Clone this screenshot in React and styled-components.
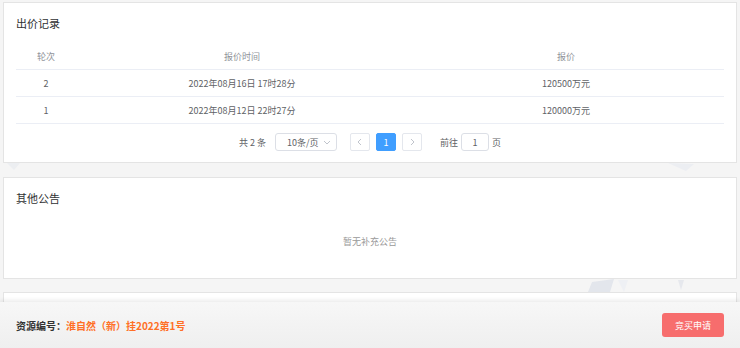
import React from 'react';
import styled, { createGlobalStyle } from 'styled-components';

const GlobalStyle = createGlobalStyle`
    html, body {
        margin: 0;
        padding: 0;
        background: #f5f5f5;
        font-family: "Microsoft YaHei", "Noto Sans CJK SC", "Liberation Sans", sans-serif;
        color: #606266;
    }
`;

const Page = styled.div`
    position: relative;
    height: 348px;
    overflow: hidden;
    padding: 2px 3px 0;
    box-sizing: border-box;
`;

const Decor = styled.svg`
    position: absolute;
    left: 0;
    top: 0;
    z-index: 0;
`;

const Card = styled.div`
    position: relative;
    z-index: 1;
    background: #fff;
    border: 1px solid #e4e4e4;
    padding: 0 12px;
    margin-bottom: ${p => p.gap || 0}px;
    height: ${p => p.h}px;
    box-sizing: border-box;
`;

const CardTitle = styled.div`
    height: 40px;
    line-height: 40px;
    font-size: 11px;
    color: #303133;
`;

const Table = styled.table`
    width: 100%;
    border-collapse: collapse;
    font-size: 9px;
    table-layout: fixed;
`;

const Th = styled.th`
    font-weight: normal;
    color: #909399;
    height: 26px;
    padding: 0;
    text-align: center;
    border-bottom: 1px solid #ebeef5;
    width: ${p => p.w || 'auto'};
`;

const Td = styled.td`
    color: #606266;
    height: 26px;
    padding: 0;
    text-align: center;
    border-bottom: 1px solid #ebeef5;
`;

const Pager = styled.div`
    display: flex;
    justify-content: center;
    align-items: center;
    padding-top: 9px;
    font-size: 9px;
    color: #606266;
    white-space: nowrap;
`;

const Total = styled.span`
    margin-right: 9px;
`;

const Select = styled.div`
    width: 62px;
    height: 18px;
    border: 1px solid #dcdfe6;
    border-radius: 3px;
    box-sizing: border-box;
    display: flex;
    align-items: center;
    justify-content: space-between;
    padding: 0 4px 0 11px;
    margin-right: 13px;
    color: #606266;
`;

const PageBtn = styled.div`
    width: 20px;
    height: 18px;
    box-sizing: border-box;
    border: 1px solid ${p => (p.active ? '#409eff' : '#e4e7ed')};
    background: ${p => (p.active ? '#409eff' : '#fff')};
    color: ${p => (p.active ? '#fff' : '#c0c4cc')};
    border-radius: 2px;
    display: flex;
    align-items: center;
    justify-content: center;
    margin-right: 6px;
`;

const Jump = styled.div`
    display: flex;
    align-items: center;
    margin-left: 12px;
    gap: 3px;
`;

const JumpInput = styled.div`
    width: 28px;
    height: 18px;
    box-sizing: border-box;
    border: 1px solid #dcdfe6;
    border-radius: 3px;
    display: flex;
    align-items: center;
    justify-content: center;
`;

const Empty = styled.div`
    text-align: center;
    line-height: 48px;
    font-size: 9px;
    color: #999;
`;

const Footer = styled.div`
    position: absolute;
    left: 0;
    right: 0;
    bottom: 0;
    height: 46px;
    z-index: 2;
    background: linear-gradient(#f7f7f7, #efefef);
    box-shadow: 0 -2px 4px rgba(0, 0, 0, 0.08);
    display: flex;
    align-items: center;
    justify-content: space-between;
    padding: 0 16px;
    box-sizing: border-box;
`;

const Code = styled.div`
    font-size: 10px;
    font-weight: bold;
    color: #333;
    span {
        color: #ff7026;
    }
`;

const Apply = styled.button`
    width: 62px;
    height: 24px;
    border: none;
    border-radius: 3px;
    background: #f76d6d;
    color: #fff;
    font-size: 9px;
    font-family: inherit;
    padding: 0;
`;

const Chevron = ({ dir }) => {
    const d = { down: 'M2 4l3 3 3-3', left: 'M6 2L3 5l3 3', right: 'M4 2l3 3-3 3' }[dir];
    return (
        <svg width="10" height="10" viewBox="0 0 10 10">
            <path d={d} fill="none" stroke="#c0c4cc" strokeWidth="1" />
        </svg>
    );
};

const records = [
    { round: 2, time: '2022年08月16日 17时28分', price: '120500万元' },
    { round: 1, time: '2022年08月12日 22时27分', price: '120000万元' },
];

const App = () => {
    return (
        <>
            <GlobalStyle />
            <Page>
                <Decor width="740" height="348">
                    <polygon points="6,162 20,163 14,170" fill="#eceef1" />
                    <polygon points="668,163 694,164 686,171" fill="#eceef2" />
                    <polygon points="592,282 614,279 610,292 588,292" fill="#e3e6ec" />
                    <polygon points="618,280 628,280 624,292" fill="#eef0f4" />
                    <polygon points="678,280 684,280 681,290" fill="#e6e8ed" />
                </Decor>
                <Card h={161} gap={14}>
                    <CardTitle>出价记录</CardTitle>
                    <Table>
                        <thead>
                            <tr>
                                <Th w="60px">轮次</Th>
                                <Th w="332px">报价时间</Th>
                                <Th>报价</Th>
                            </tr>
                        </thead>
                        <tbody>
                            {records.map(r => (
                                <tr key={r.round}>
                                    <Td>{r.round}</Td>
                                    <Td>{r.time}</Td>
                                    <Td>{r.price}</Td>
                                </tr>
                            ))}
                        </tbody>
                    </Table>
                    <Pager>
                        <Total>共 2 条</Total>
                        <Select>
                            10条/页
                            <Chevron dir="down" />
                        </Select>
                        <PageBtn><Chevron dir="left" /></PageBtn>
                        <PageBtn active>1</PageBtn>
                        <PageBtn><Chevron dir="right" /></PageBtn>
                        <Jump>
                            前往
                            <JumpInput>1</JumpInput>
                            页
                        </Jump>
                    </Pager>
                </Card>
                <Card h={102} gap={13}>
                    <CardTitle>其他公告</CardTitle>
                    <Empty>暂无补充公告</Empty>
                </Card>
                <Card h={60} />
                <Footer>
                    <Code>
                        资源编号：<span>淮自然（新）挂2022第1号</span>
                    </Code>
                    <Apply>竞买申请</Apply>
                </Footer>
            </Page>
        </>
    );
};

export default App;
